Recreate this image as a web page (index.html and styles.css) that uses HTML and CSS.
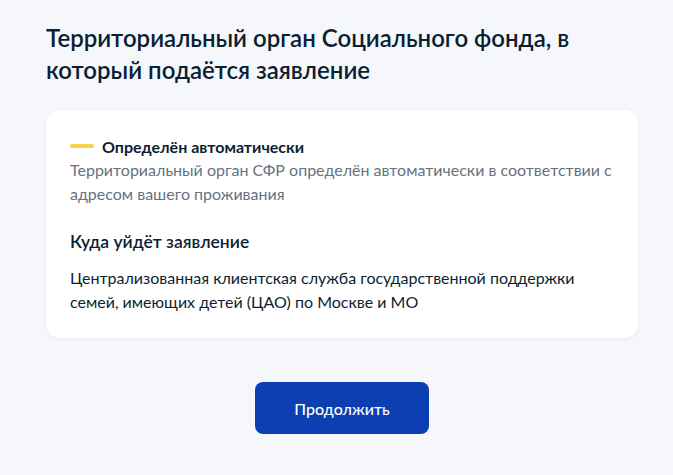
FILE: index.html
```html
<!DOCTYPE html>
<html lang="ru">
<head>
<meta charset="utf-8">
<link rel="stylesheet" href="styles.css">
</head>
<body>
<main class="page">
  <h1 class="title">Территориальный орган Социального фонда, в который подаётся заявление</h1>
  <section class="card">
    <div class="status">
      <span class="dash"></span>
      <span class="status-text">Определён автоматически</span>
    </div>
    <p class="hint">Территориальный орган СФР определён автоматически в соответствии с адресом вашего проживания</p>
    <h2 class="subtitle">Куда уйдёт заявление</h2>
    <p class="body">Централизованная клиентская служба государственной поддержки семей, имеющих детей (ЦАО) по Москве и МО</p>
  </section>
  <div class="actions">
    <button class="btn">Продолжить</button>
  </div>
</main>
</body>
</html>
```
FILE: styles.css
```css
* { box-sizing: border-box; }
html, body { margin: 0; padding: 0; }
body {
  background: #f5f7fb;
  font-family: Lato, "Noto Sans", sans-serif;
  color: #0b1f33;
  width: 673px;
  height: 475px;
  overflow: hidden;
}
.page {
  padding: 22px 35px 0 46px;
}
.title {
  margin: 0;
  font-size: 24px;
  line-height: 32px;
  font-weight: 600;
  color: #0b1f33;
  width: 560px;
}
.card {
  margin-top: 24px;
  width: 592px;
  background: #fff;
  border-radius: 14px;
  box-shadow: 0 1px 4px rgba(11, 31, 51, 0.06);
  padding: 24px 24px 24px 24px;
}
.status {
  display: flex;
  align-items: center;
  gap: 8px;
  height: 24px;
}
.dash {
  width: 24px;
  height: 4px;
  border-radius: 2px;
  background: #f6d345;
}
.status-text {
  font-size: 16px;
  font-weight: 700;
  color: #0b1f33;
}
.hint {
  margin: 0;
  font-size: 16px;
  line-height: 24px;
  color: #66727f;
}
.subtitle {
  margin: 24px 0 0;
  font-size: 17.5px;
  line-height: 24px;
  font-weight: 600;
}
.body {
  margin: 12px 0 0;
  font-size: 16px;
  line-height: 24px;
  color: #0b1f33;
  padding-right: 20px;
}
.actions {
  display: flex;
  justify-content: center;
  width: 592px;
  padding-top: 44px;
}
.btn {
  width: 174px;
  height: 52px;
  border: none;
  border-radius: 8px;
  background: #0c40b2;
  color: #fff;
  font-family: Lato, "Noto Sans", sans-serif;
  font-size: 16px;
  font-weight: 500;
}
```
